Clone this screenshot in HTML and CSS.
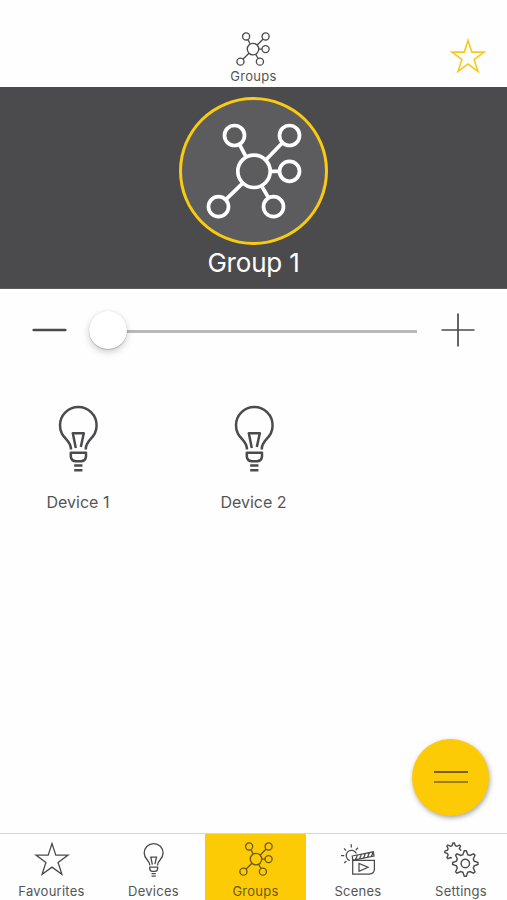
FILE: index.html
```
<!DOCTYPE html>
<html lang="en">
<head>
  <meta charset="UTF-8">
  <title>Group 1</title>
  <link rel="stylesheet" href="styles.css">
</head>
<body>
  <svg class="sprite">
    <symbol id="icon-groups" viewBox="0 0 96 96">
      <circle cx="48" cy="48.3" r="16.2"/>
      <circle cx="28.5" cy="12.5" r="10"/>
      <circle cx="83.5" cy="12.5" r="10"/>
      <circle cx="83.5" cy="48.3" r="10"/>
      <circle cx="67.5" cy="83.7" r="10"/>
      <circle cx="12.5" cy="83.7" r="10"/>
      <path d="M33.5 21.3L40 33.8M76.5 19.8L60 36.8M64 48.3H73.5M55.5 62.8L62.5 74.8M36.5 60.3L19.5 76.8"/>
    </symbol>
    <symbol id="icon-star" viewBox="0 0 34 34">
      <path d="M17 1.5L20.8 13.1H33L23.1 20.5L26.9 32.3L17 25.1L7.1 32.3L10.9 20.5L1 13.1H13.2Z"/>
    </symbol>
    <symbol id="icon-bulb" viewBox="0 0 40 68">
      <path d="M13 45.5C13 34.5 2 35 2 21.3A18.3 18.3 0 0 1 38.6 21.3C38.6 35 27.7 34.5 27.7 45.5"/>
      <path d="M17.8 44L14.8 29.3H25.8L22.8 43"/>
      <path d="M12.8 48.8H28V52.5Q27.5 57.2 23 57.2H17.8Q13.3 57.2 12.8 52.5ZM16.2 61.5H24.4M16.2 66.3H24.4"/>
    </symbol>
    <symbol id="icon-scenes" viewBox="0 0 36 36">
      <path d="M11.3 2.3V5.5M18 5.7L15.7 8M4 6.3L6 8.5M1 13.7H4.3M4.3 21L6.3 19M9.8 18.6A5.3 5.3 0 1 1 16.4 11.6"/>
      <path d="M12.2 14L33.3 9.8L34 14L12.8 18.2ZM15.5 17.5L17.5 13M19.5 16.7L21.5 12.2M23.5 16L25.5 11.4M27.5 15.2L29.5 10.6M31.3 14.5L33 10.5"/>
      <path d="M12.7 18.3H34.4V27Q34.4 32 29 32H12.7Z"/>
      <path d="M19 21.4V29.2L28 25.3Z"/>
    </symbol>
    <symbol id="icon-settings" viewBox="0 0 36 36">
      <path transform="translate(22.3 21.5)" d="M-2.4-8.9L-1-12.7H1L2.4-8.9L4.6-8L8.3-9.7L9.7-8.3L8-4.6L8.9-2.4L12.7-1V1L8.9 2.4L8 4.6L9.7 8.3L8.3 9.7L4.6 8L2.4 8.9L1 12.7H-1L-2.4 8.9L-4.6 8L-8.3 9.7L-9.7 8.3L-8 4.6L-8.9 2.4L-12.7 1V-1L-8.9-2.4L-8-4.6L-9.7-8.3L-8.3-9.7L-4.6-8Z"/>
      <circle cx="22.3" cy="21.5" r="4.2"/>
      <path transform="translate(10.7 9.9)" d="M7.5-1.5L5.6-3.2L6.8-5.8L5.8-6.8L3.2-5.6L1.7-6.2L.7-8.9H-.7L-1.7-6.2L-3.2-5.6L-5.8-6.8L-6.8-5.8L-5.6-3.2L-6.2-1.7L-8.9-.7V.7L-6.2 1.7L-5.6 3.2L-6.8 5.8L-5.8 6.8L-3.2 5.6L-1.7 6.2"/>
    </symbol>
  </svg>

  <header class="header">
    <div class="header-title">
      <svg class="icon icon-groups"><use href="#icon-groups"/></svg>
      <span>Groups</span>
    </div>
    <svg class="icon favourite"><use href="#icon-star"/></svg>
  </header>

  <section class="hero">
    <div class="hero-circle">
      <svg class="icon"><use href="#icon-groups"/></svg>
    </div>
    <h1>Group 1</h1>
  </section>

  <div class="dimmer">
    <svg class="icon minus" viewBox="0 0 34 34"><path d="M1.7 17H33.3"/></svg>
    <div class="slider"><div class="thumb"></div></div>
    <svg class="icon plus" viewBox="0 0 34 34"><path d="M.5 17H33.5M17 .5V33.5"/></svg>
  </div>

  <main class="devices">
    <div class="device">
      <svg class="icon"><use href="#icon-bulb"/></svg>
      <span>Device 1</span>
    </div>
    <div class="device">
      <svg class="icon"><use href="#icon-bulb"/></svg>
      <span>Device 2</span>
    </div>
  </main>

  <div class="fab">
    <span></span>
    <span class="thin"></span>
  </div>

  <nav class="tabs">
    <div class="tab">
      <svg class="icon icon-star"><use href="#icon-star"/></svg>
      <span>Favourites</span>
    </div>
    <div class="tab">
      <svg class="icon icon-bulb"><use href="#icon-bulb"/></svg>
      <span>Devices</span>
    </div>
    <div class="tab active">
      <svg class="icon icon-groups"><use href="#icon-groups"/></svg>
      <span>Groups</span>
    </div>
    <div class="tab">
      <svg class="icon icon-scenes"><use href="#icon-scenes"/></svg>
      <span>Scenes</span>
    </div>
    <div class="tab">
      <svg class="icon icon-settings"><use href="#icon-settings"/></svg>
      <span>Settings</span>
    </div>
  </nav>
</body>
</html>
```
FILE: styles.css
```
* { box-sizing: border-box; }
body {
  font-family: Inter, Roboto, sans-serif;
  background-color: #fefefe;
  color: #555;
  margin: 0;
  height: 900px;
  display: flex;
  flex-direction: column;
  position: relative;
  overflow: hidden;
}
.sprite { position: absolute; width: 0; height: 0; }
.icon {
  display: block;
  overflow: visible;
  fill: none;
  stroke: #4b4b4d;
  stroke-linejoin: round;
}
symbol { overflow: visible; }
.header {
  height: 87px;
  flex: none;
  display: grid;
  grid-template-columns: 1fr auto 1fr;
  align-items: start;
}
.header-title {
  grid-column: 2;
  padding-top: 32px;
  display: flex;
  flex-direction: column;
  align-items: center;
  font-size: 13px;
  line-height: 16px;
  letter-spacing: 0.3px;
}
.header-title span { margin-top: 2px; }
.icon-groups { width: 34px; height: 34px; stroke-width: 3.8; }
.favourite {
  width: 34px;
  height: 34px;
  justify-self: end;
  margin: 39px 22px 0 0;
  stroke: #f6c91c;
  stroke-width: 1.6;
  stroke-linejoin: miter;
}
.hero {
  height: 202px;
  flex: none;
  background-color: #4b4b4d;
  border-bottom: 1px solid #5c5c5e;
  padding-top: 10px;
  display: flex;
  flex-direction: column;
  align-items: center;
}
.hero-circle {
  width: 149px;
  height: 148px;
  border: 3px solid #f9ca12;
  border-radius: 50%;
  background-color: #5c5c5e;
  display: flex;
  align-items: center;
  justify-content: center;
}
.hero-circle .icon {
  width: 96px;
  height: 96px;
  stroke: #fff;
  stroke-width: 3.7;
}
.hero h1 {
  margin: 2px 0 0;
  color: #fff;
  font-size: 26px;
  font-weight: 400;
  line-height: 32px;
  letter-spacing: -0.2px;
}
.dimmer {
  height: 81px;
  flex: none;
  padding: 0 32px;
  display: flex;
  align-items: center;
}
.dimmer .icon { width: 34px; height: 34px; flex: none; }
.minus { stroke-width: 2.6; stroke-linecap: round; }
.plus { stroke-width: 1.7; }
.slider {
  flex: 1;
  height: 38px;
  margin: 0 24px 0 23px;
  background: linear-gradient(#b9b9b9, #b9b9b9) 0 19px / 100% 3px no-repeat;
}
.thumb {
  width: 38px;
  height: 38px;
  border-radius: 50%;
  background-color: #fff;
  box-shadow: 0 3px 7px rgba(0,0,0,0.2), 0 1px 1px rgba(0,0,0,0.16), 0 0 1px rgba(0,0,0,0.15);
}
.devices {
  flex: 1;
  display: grid;
  grid-template-columns: 156px 195px;
  align-items: start;
}
.device {
  padding-top: 34px;
  display: flex;
  flex-direction: column;
  align-items: center;
  font-size: 16px;
  line-height: 20px;
}
.device .icon { width: 40px; height: 68px; stroke-width: 2.5; }
.device span { margin-top: 20px; }
.fab {
  position: absolute;
  right: 18px;
  bottom: 84px;
  width: 77px;
  height: 77px;
  border-radius: 50%;
  background-color: #fdca06;
  box-shadow: 1px 2px 5px rgba(0,0,0,0.35);
  display: flex;
  flex-direction: column;
  align-items: center;
  justify-content: center;
  gap: 8px;
  padding-bottom: 1px;
}
.fab span {
  width: 34px;
  height: 2px;
  background-color: #73600f;
}
.fab .thin { background-color: #9b7f0e; }
.tabs {
  height: 67px;
  flex: none;
  padding-left: 1px;
  border-top: 1px solid #d6d6d6;
  display: grid;
  grid-template-columns: repeat(3, 101px) 102px 102px;
  column-gap: 1px;
}
.tab {
  padding-top: 8px;
  display: flex;
  flex-direction: column;
  align-items: center;
  font-size: 13px;
  line-height: 16px;
  letter-spacing: 0.25px;
}
.tab span { margin-top: auto; margin-bottom: 1px; }
.tab .icon { stroke-linejoin: miter; }
.active { background-color: #fdca06; }
.active .icon { stroke: #6b5a12; }
.active span { color: #6b5a12; }
.icon-star { width: 34px; height: 34px; stroke-width: 1.3; }
.icon-bulb { width: 21px; height: 35px; stroke-width: 2.6; }
.icon-scenes { width: 36px; height: 36px; stroke-width: 1.25; }
.icon-settings { width: 36px; height: 36px; stroke-width: 1.4; }
```
